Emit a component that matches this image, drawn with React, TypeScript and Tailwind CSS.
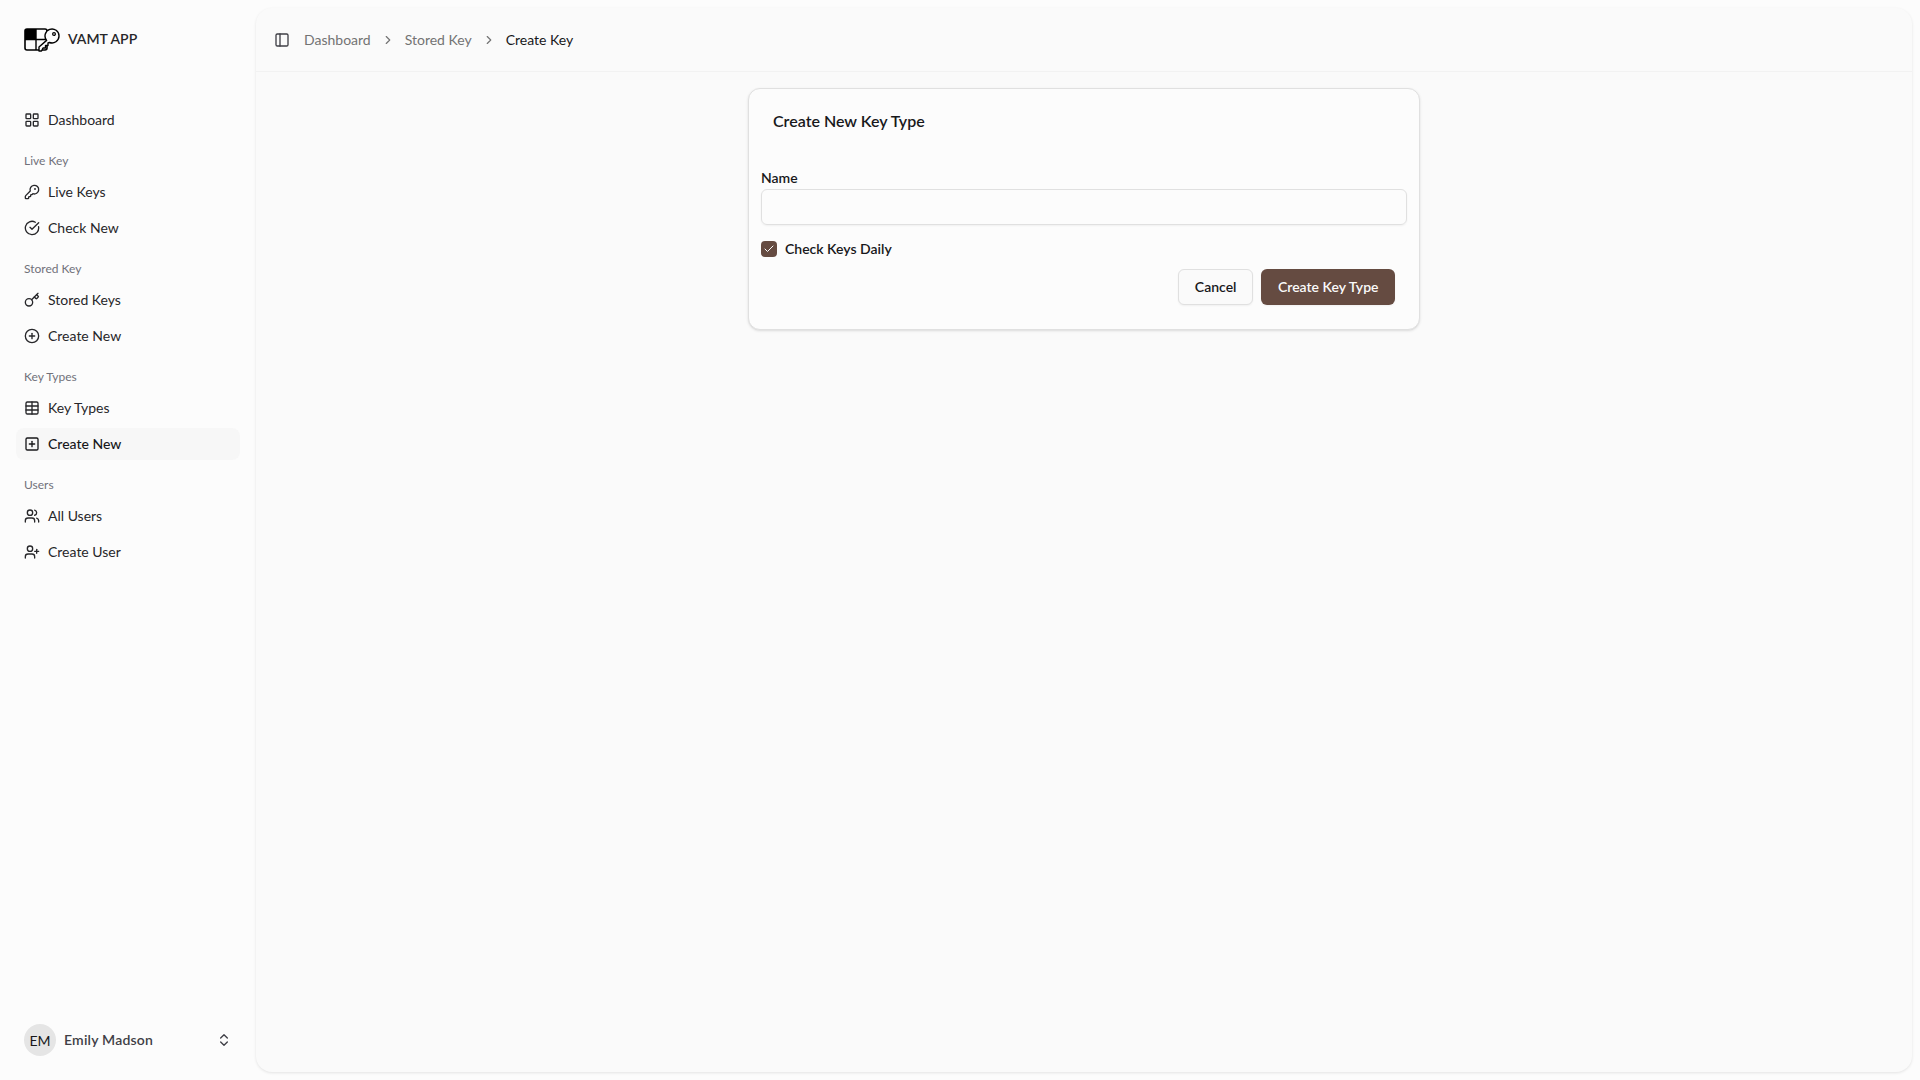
import React from "react";
import { LayoutGrid, KeyRound, CircleCheckBig, Key, CirclePlus, Table, SquarePlus, Users, UserPlus, ChevronsUpDown, PanelLeft, ChevronRight, Check } from "lucide-react";

const font = "font-['Lato',sans-serif]";

function Item({ icon: Icon, label, active }: { icon: React.ElementType; label: string; active?: boolean }) {
  return (
    <div className={`flex h-8 items-center gap-2 rounded-lg px-2 text-[14px] ${active ? "bg-[#f7f7f7] font-medium text-[#18181b]" : "text-[#27272a]"}`}>
      <Icon size={16} strokeWidth={2} className="shrink-0" />
      <span className="pb-[1px]">{label}</span>
    </div>
  );
}

function Group({ title, items }: { title: string; items: { icon: React.ElementType; label: string; active?: boolean }[] }) {
  return (
    <div className="flex flex-col">
      <div className="flex h-8 items-center px-2 pt-[2px] text-[12px] text-[#71717a]">{title}</div>
      <div className="flex flex-col gap-1">
        {items.map((i) => (
          <Item key={i.label} {...i} />
        ))}
      </div>
    </div>
  );
}

function Logo() {
  return (
    <svg width="36" height="24" viewBox="0 0 36 24" fill="none" className="shrink-0">
      <rect x="1" y="1" width="22" height="21" rx="2" stroke="#000" strokeWidth="1.6" />
      <rect x="1" y="1" width="11" height="10.5" fill="#000" />
      <path d="M12 1v21M1 11.5h22" stroke="#000" strokeWidth="1.4" />
      <path d="M15 23v-4l7.6-6.6A7 7 0 1 1 25.5 14.5l-1.5.5v2.5h-2.5v2.5H19l-1.5 3z" fill="#fcfcfc" stroke="#000" strokeWidth="1.4" strokeLinejoin="round" />
      <circle cx="30" cy="6" r="1.4" stroke="#000" strokeWidth="1.2" />
    </svg>
  );
}

export default function App() {
  return (
    <div className={`flex h-screen w-full bg-[#fcfcfc] text-[#18181b] ${font}`}>
      <aside className="flex w-[256px] shrink-0 flex-col">
        <div className="flex h-[96px] shrink-0 items-start gap-2 px-6 pt-[28px]">
          <Logo />
          <span className="mt-[1px] text-[14px] font-semibold leading-5 text-[#27272a]">VAMT APP</span>
        </div>
        <nav className="flex flex-col gap-2 px-4 pt-2">
          <Item icon={LayoutGrid} label="Dashboard" />
          <Group title="Live Key" items={[{ icon: KeyRound, label: "Live Keys" }, { icon: CircleCheckBig, label: "Check New" }]} />
          <Group title="Stored Key" items={[{ icon: Key, label: "Stored Keys" }, { icon: CirclePlus, label: "Create New" }]} />
          <Group title="Key Types" items={[{ icon: Table, label: "Key Types" }, { icon: SquarePlus, label: "Create New", active: true }]} />
          <Group title="Users" items={[{ icon: Users, label: "All Users" }, { icon: UserPlus, label: "Create User" }]} />
        </nav>
        <div className="mt-auto flex h-[64px] items-center gap-2 px-6 pb-[16px]">
          <div className="flex size-8 items-center justify-center rounded-full bg-[#e5e5e5] text-[14px] text-[#18181b]">EM</div>
          <span className="pb-[1px] text-[14px] font-semibold tracking-[0.2px] text-[#3f3f46]">Emily Madson</span>
          <ChevronsUpDown size={16} className="ml-auto text-[#3f3f46]" />
        </div>
      </aside>
      <div className="flex flex-1 flex-col py-2 pr-2">
        <main className="flex flex-1 flex-col rounded-2xl bg-[#fafafa] shadow-[0_1px_3px_rgba(0,0,0,0.1)]">
          <header className="flex h-[64px] shrink-0 items-center gap-[14px] border-b border-[#f2f2f2] px-[18px]">
            <PanelLeft size={16} className="text-[#3f3f46]" />
            <div className="flex items-center gap-[10px] text-[14px] text-[#737373]">
              <span>Dashboard</span>
              <ChevronRight size={14} />
              <span>Stored Key</span>
              <ChevronRight size={14} />
              <span className="text-[#18181b]">Create Key</span>
            </div>
          </header>
          <div className="flex justify-center pt-4">
            <section className="h-[242px] w-[672px] rounded-xl border border-[#e0e0e0] bg-[#fcfcfc] px-3 shadow-sm">
              <h2 className="px-3 pt-[21px] text-[16px] font-semibold leading-[22px] text-[#18181b]">Create New Key Type</h2>
              <label className="mt-[36px] block text-[14px] font-semibold leading-5 text-[#18181b]">Name</label>
              <input className="mt-[1px] block h-9 w-full rounded-md border border-[#e0e0e0] bg-transparent shadow-xs outline-none" />
              <div className="mt-[16px] flex items-center gap-2">
                <div className="flex size-4 items-center justify-center rounded-[4px] bg-[#654b41] text-white">
                  <Check size={12} strokeWidth={2} />
                </div>
                <span className="text-[14px] font-semibold leading-4 text-[#18181b]">Check Keys Daily</span>
              </div>
              <div className="mt-[12px] flex justify-end gap-2 pr-3">
                <button className="h-9 rounded-md border border-[#e0e0e0] bg-[#fafafa] px-4 pb-[1px] text-[14px] font-semibold text-[#18181b] shadow-xs">Cancel</button>
                <button className="h-9 rounded-md bg-[#654b41] px-[16.5px] pb-[1px] text-[14px] font-semibold text-[#fafafa] shadow-xs">Create Key Type</button>
              </div>
            </section>
          </div>
        </main>
      </div>
    </div>
  );
}
